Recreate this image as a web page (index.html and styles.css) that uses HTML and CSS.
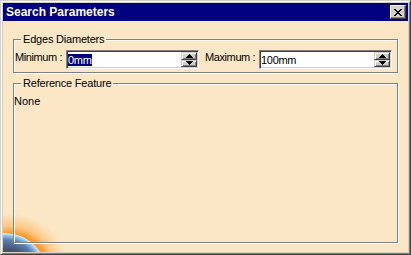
FILE: index.html
```html
<!DOCTYPE html>
<html lang="en">
<head>
    <meta charset="UTF-8">
    <meta name="viewport" content="width=device-width, initial-scale=1.0">
    <title>Search Parameters</title>
    <link rel="stylesheet" href="styles.css">
</head>
<body>
    <div class="dialog">
        <div class="titlebar">
            <span class="title">Search Parameters</span>
            <button class="close">
                <svg width="8" height="7" viewBox="0 0 8 7" shape-rendering="crispEdges">
                    <rect x="0" y="0" width="2" height="1"/><rect x="6" y="0" width="2" height="1"/>
                    <rect x="1" y="1" width="2" height="1"/><rect x="5" y="1" width="2" height="1"/>
                    <rect x="2" y="2" width="4" height="1"/>
                    <rect x="3" y="3" width="2" height="1"/>
                    <rect x="2" y="4" width="4" height="1"/>
                    <rect x="1" y="5" width="2" height="1"/><rect x="5" y="5" width="2" height="1"/>
                    <rect x="0" y="6" width="2" height="1"/><rect x="6" y="6" width="2" height="1"/>
                </svg>
            </button>
        </div>

        <div class="panel">
            <fieldset class="group">
                <legend>Edges Diameters</legend>
                <div class="row">
                    <span class="lbl lbl-min">Minimum :</span>
                    <div class="field">
                        <span class="value selected">0mm</span>
                        <div class="spin">
                            <div class="spin-btn">
                                <svg width="7" height="4" viewBox="0 0 7 4" shape-rendering="crispEdges">
                                    <rect x="3" y="0" width="1" height="1"/><rect x="2" y="1" width="3" height="1"/>
                                    <rect x="1" y="2" width="5" height="1"/><rect x="0" y="3" width="7" height="1"/>
                                </svg>
                            </div>
                            <div class="spin-btn">
                                <svg width="7" height="4" viewBox="0 0 7 4" shape-rendering="crispEdges">
                                    <rect x="0" y="0" width="7" height="1"/><rect x="1" y="1" width="5" height="1"/>
                                    <rect x="2" y="2" width="3" height="1"/><rect x="3" y="3" width="1" height="1"/>
                                </svg>
                            </div>
                        </div>
                    </div>
                    <span class="lbl lbl-max">Maximum :</span>
                    <div class="field">
                        <span class="value">100mm</span>
                        <div class="spin">
                            <div class="spin-btn">
                                <svg width="7" height="4" viewBox="0 0 7 4" shape-rendering="crispEdges">
                                    <rect x="3" y="0" width="1" height="1"/><rect x="2" y="1" width="3" height="1"/>
                                    <rect x="1" y="2" width="5" height="1"/><rect x="0" y="3" width="7" height="1"/>
                                </svg>
                            </div>
                            <div class="spin-btn">
                                <svg width="7" height="4" viewBox="0 0 7 4" shape-rendering="crispEdges">
                                    <rect x="0" y="0" width="7" height="1"/><rect x="1" y="1" width="5" height="1"/>
                                    <rect x="2" y="2" width="3" height="1"/><rect x="3" y="3" width="1" height="1"/>
                                </svg>
                            </div>
                        </div>
                    </div>
                </div>
            </fieldset>

            <fieldset class="group group-grow">
                <legend>Reference Feature</legend>
                <div class="none">None</div>
            </fieldset>
        </div>
    </div>
</body>
</html>
```

FILE: styles.css
```css
* {
    box-sizing: border-box;
}
body {
    margin: 0;
    font-family: "Liberation Sans", Arial, sans-serif;
    font-size: 11px;
    color: #000;
    background-color: #d4d0c8;
}
.dialog {
    width: 411px;
    height: 255px;
    padding: 2px;
    border: 1px solid;
    border-color: #d4d0c8 #404040 #404040 #d4d0c8;
    box-shadow: inset 1px 1px #fff, inset -1px -1px #808080;
    background-color: #d4d0c8;
    display: flex;
    flex-direction: column;
}
.titlebar {
    height: 18px;
    padding: 0 2px 0 3px;
    background-color: #000080;
    color: #fff;
    display: flex;
    align-items: center;
    justify-content: space-between;
}
.title {
    font-weight: bold;
    font-size: 12px;
}
.close {
    width: 16px;
    height: 14px;
    padding: 0;
    border: 1px solid;
    border-color: #fff #404040 #404040 #fff;
    box-shadow: inset -1px -1px #808080;
    background-color: #d4d0c8;
    display: flex;
    align-items: center;
    justify-content: center;
}
.panel {
    flex: 1;
    display: flex;
    flex-direction: column;
    gap: 3px;
    padding: 11px 10px 9px 10px;
    background:
        radial-gradient(circle 42px at 2px 254px, #363c50 0, #46526f 26px, #5a7fae 35px, #8fc3ea 39.5px, #d2ecf6 41.5px, rgba(251, 231, 198, 0) 42px),
        radial-gradient(circle 60px at 6px 252px, rgba(255, 150, 40, 0.95) 40px, rgba(255, 175, 80, 0.55) 47px, rgba(251, 231, 198, 0) 60px),
        #fbe7c6;
}
.group {
    margin: 0;
    padding: 4px 0 3px 1px;
    min-width: 0;
    border: 1px solid #808080;
    box-shadow: 1px 1px #fff, inset 1px 1px #fff;
}
.group legend {
    margin-left: 6px;
    padding: 0 2px;
    line-height: 14px;
    background-color: #fbe7c6;
    letter-spacing: -0.2px;
}
.group-grow {
    flex: 1;
}
.row {
    display: flex;
    align-items: flex-start;
    height: 19px;
}
.lbl {
    line-height: 14px;
    white-space: nowrap;
    letter-spacing: -0.4px;
}
.lbl-min {
    width: 51px;
}
.lbl-max {
    width: 54px;
    margin-left: 6px;
}
.field {
    width: 133px;
    height: 19px;
    padding: 1px 1px 1px 1px;
    border: 1px solid;
    border-color: #808080 #fff #fff #808080;
    box-shadow: inset 1px 1px #404040, inset -1px -1px #d4d0c8;
    background-color: #fff;
    display: flex;
    align-items: flex-start;
    justify-content: space-between;
}
.value {
    margin-top: 2px;
    line-height: 12px;
    letter-spacing: -0.3px;
}
.selected {
    background-color: #000080;
    color: #fff;
}
.spin {
    width: 16px;
    height: 15px;
    display: flex;
    flex-direction: column;
}
.spin-btn {
    flex: 1;
    border: 1px solid;
    border-color: #d4d0c8 #404040 #404040 #d4d0c8;
    box-shadow: inset 1px 1px #fff, inset -1px -1px #808080;
    background-color: #d4d0c8;
    display: flex;
    align-items: center;
    justify-content: center;
}
.none {
    margin-left: -1px;
    line-height: 14px;
}
```
